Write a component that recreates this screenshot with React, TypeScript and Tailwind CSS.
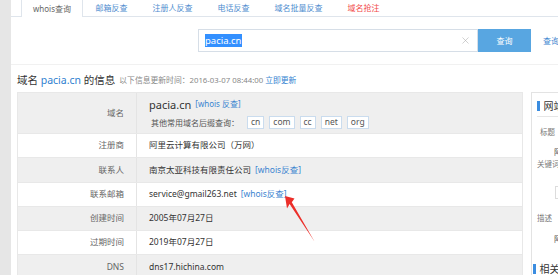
import { X } from 'lucide-react'

const tabs = ['邮箱反查', '注册人反查', '电话反查', '域名批量反查']
const suffixes = ['cn', 'com', 'cc', 'net', 'org']

interface InfoRow {
  label: string
  value: string
  link?: boolean
}

const rows: InfoRow[] = [
  { label: '注册商', value: '阿里云计算有限公司（万网）' },
  { label: '联系人', value: '南京太亚科技有限责任公司', link: true },
  { label: '联系邮箱', value: 'service@gmail263.net', link: true },
  { label: '创建时间', value: '2005年07月27日' },
  { label: '过期时间', value: '2019年07月27日' },
  { label: 'DNS', value: 'dns17.hichina.com' },
]

export default function App() {
  return (
    <div className="relative flex h-[275px] w-[558px] overflow-hidden bg-white font-['Noto_Sans','Noto_Sans_CJK_SC',sans-serif] text-[#333]">
      <div className="w-[11px] shrink-0 bg-[#e6e6e6]" />

      <div className="flex min-w-0 flex-1 flex-col">
        {/* tabs */}
        <div className="flex h-[17px] shrink-0 whitespace-nowrap border-b border-[#dfe5ec] pl-[10px] text-[8px] leading-none">
          <div className="-mb-px flex h-[17px] items-center border-x border-[#dfe5ec] bg-white px-[11px] text-[#666]">
            whois查询
          </div>
          {tabs.map((t) => (
            <div key={t} className="flex items-center px-[12.5px] text-[#4f8dcf]">
              {t}
            </div>
          ))}
          <div className="flex items-center px-[12.5px] text-[#f24a4a]">域名抢注</div>
        </div>

        {/* search */}
        <div className="flex h-[48px] shrink-0 whitespace-nowrap border-b border-[#f1f1f1] pl-[187px] pt-[12px]">
          <div className="flex h-[23px] w-[280px] shrink-0 items-center border border-[#d6dee7] pl-[6px] pr-[6px]">
            <span className="bg-[#3390ff] text-[9.5px] leading-[13px] text-white">pacia.cn</span>
            <X className="ml-auto h-[11px] w-[11px] text-[#aaa]" strokeWidth={1.2} />
          </div>
          <div className="flex h-[23px] w-[53px] shrink-0 items-center justify-center bg-[#58a6e1] text-[8px] text-white">
            查询
          </div>
          <div className="ml-[12px] flex h-[23px] shrink-0 items-center text-[8px] text-[#3b84d0]">查询</div>
        </div>

        {/* title */}
        <div className="flex h-[27px] shrink-0 items-center gap-[4px] whitespace-nowrap pl-[6px] pt-[4px]">
          <span className="text-[10.5px]">
            域名 <span className="text-[#2f7fd0]">pacia.cn</span> 的信息
          </span>
          <span className="text-[7.8px] text-[#888]">
            以下信息更新时间：2016-03-07 08:44:00 <span className="text-[#2f7fd0]">立即更新</span>
          </span>
        </div>

        {/* body */}
        <div className="flex min-h-0 flex-1 gap-[8px] whitespace-nowrap pl-[6px]">
          <div className="w-[506px] shrink-0 border-x border-t border-[#e8e8e8]">
            <div className="grid h-[40px] grid-cols-[119px_1fr] bg-[#efefef]">
              <div className="flex items-center justify-end border-r border-[#e4e4e4] pr-[12px] text-[8.5px] text-[#666]">
                域名
              </div>
              <div className="flex flex-col justify-center gap-[4px] pl-[12px]">
                <div className="flex h-[15px] items-center gap-[4px]">
                  <span className="text-[11px] leading-none text-[#333]">pacia.cn</span>
                  <span className="text-[8px] text-[#3b84d0]">[whois 反查]</span>
                </div>
                <div className="flex h-[14px] items-center">
                  <span className="ml-[2px] mr-[8px] text-[8px] text-[#555]">其他常用域名后缀查询：</span>
                  <div className="flex gap-[5px]">
                    {suffixes.map((s) => (
                      <span
                        key={s}
                        className="flex h-[13px] items-center border border-[#cadcee] bg-white px-[3px] text-[8.5px] text-[#555]"
                      >
                        {s}
                      </span>
                    ))}
                  </div>
                </div>
              </div>
            </div>

            {rows.map((r, i) => (
              <div
                key={r.label}
                className={
                  i % 2 === 0
                    ? 'grid h-[24.3px] grid-cols-[119px_1fr] border-t border-[#e8e8e8] bg-white'
                    : 'grid h-[24.3px] grid-cols-[119px_1fr] border-t border-[#e8e8e8] bg-[#efefef]'
                }
              >
                <div className="flex items-center justify-end border-r border-[#e4e4e4] pr-[12px] text-[8.5px] text-[#666]">
                  {r.label}
                </div>
                <div className="flex items-center gap-[4px] pl-[12px] text-[8.5px] text-[#333]">
                  {r.value}
                  {r.link && <span className="text-[#3b84d0]">[whois反查]</span>}
                </div>
              </div>
            ))}
          </div>

          {/* side panel, runs past the window edge */}
          <div className="w-[60px] shrink-0 border-l border-t border-[#e3e3e3]">
            <div className="ml-[5px] flex items-center border-b border-[#e6e6e6] pb-[5px] pt-[8px]">
              <div className="h-[10px] w-[2.5px] bg-[#3b8de0]" />
              <span className="ml-[4px] text-[10px] leading-[10px] text-[#333]">网站信息</span>
            </div>
            <div className="mt-[10px] pl-[8px] text-[7.5px] leading-[10px] text-[#777]">标题</div>
            <div className="mt-[10px] pl-[22px] text-[8px] leading-[10px] text-[#444]">阿里云</div>
            <div className="mt-[2px] pl-[5px] text-[7.5px] leading-[10px] text-[#777]">关键词</div>
            <div className="ml-[23px] mt-[17px] h-[13px] w-[30px] border border-[#dcdcdc]" />
            <div className="mt-[14px] pl-[5px] text-[7.5px] leading-[10px] text-[#777]">描述</div>
            <div className="mt-[11px] pl-[22px] text-[8px] leading-[10px] text-[#444]">阿里云</div>
            <div className="ml-[1px] mt-[20px] flex items-center">
              <div className="h-[10px] w-[2.5px] bg-[#3b8de0]" />
              <span className="ml-[4px] text-[10px] leading-[10px] text-[#333]">相关信息</span>
            </div>
          </div>
        </div>
      </div>

      {/* red annotation arrow */}
      <svg className="pointer-events-none absolute inset-0" width="558" height="275" viewBox="0 0 558 275">
        <polygon
          points="285,196 294.5,198.5 291.8,202.3 314.5,241.5 289.6,204 287,208.5"
          fill="#ec2f2a"
        />
      </svg>
    </div>
  )
}
